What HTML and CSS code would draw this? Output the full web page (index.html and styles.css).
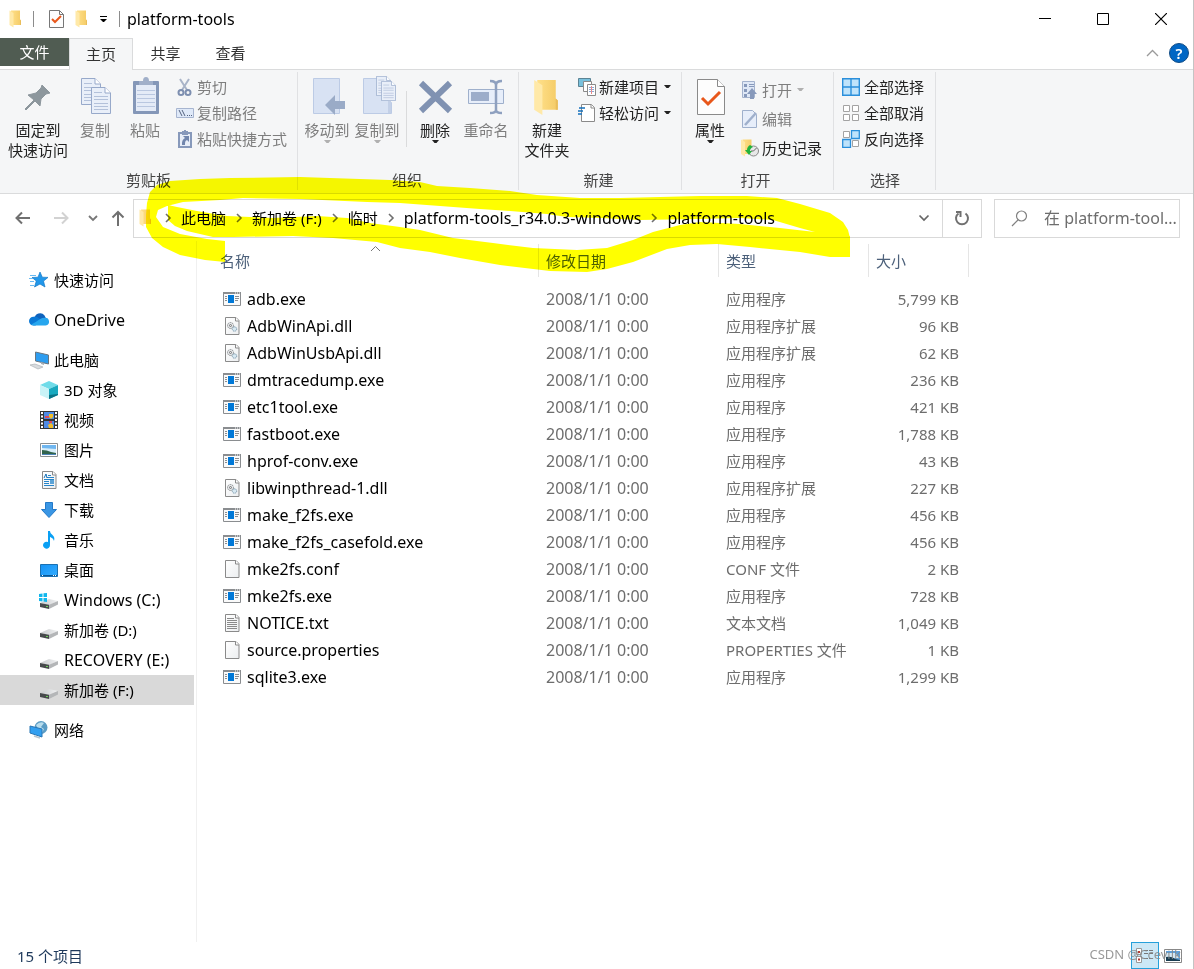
FILE: index.html
```html
<!DOCTYPE html>
<html lang="zh-CN">
<head>
<meta charset="utf-8">
<title>platform-tools</title>
<link rel="stylesheet" href="styles.css">
</head>
<body>
<svg class="defs" aria-hidden="true">
  <defs>
    <linearGradient id="gold" x1="0" x2="1"><stop offset="0" stop-color="#ffe08a"/><stop offset="1" stop-color="#f4cb66"/></linearGradient>
    <linearGradient id="paper" x1="0" y1="0" x2="1" y2="1"><stop offset="0" stop-color="#fff"/><stop offset="1" stop-color="#eceef0"/></linearGradient>
    <linearGradient id="drivetop" x1="0" x2="1"><stop offset="0" stop-color="#c9cbcd"/><stop offset="1" stop-color="#f0f1f2"/></linearGradient>
    <linearGradient id="screen" x1="0" x2="1" y2="1"><stop offset="0" stop-color="#1492f5"/><stop offset="1" stop-color="#35adff"/></linearGradient>
  </defs>
  <symbol id="folder" viewBox="0 0 24 36"><path fill="url(#gold)" d="M3 1h18v18l2 2v9H3z"/><path fill="#ffe9a8" d="M0 1l8 5v29l-8-5z"/><path fill="#e9bd5b" d="M21 19l2 2v9h-2z"/></symbol>
  <symbol id="exe" viewBox="0 0 18 18"><path fill="#fafafa" stroke="#8a8d90" d="M.5 2.500h17v13H.5z"/><path stroke="#8a8d90" stroke-width="2" d="M0 3h18"/><path stroke="#fff" d="M12 3h1m1 0h1m1 0h1"/><path fill="#0078d7" d="M5 5h6v8H5z"/><path stroke="#8a8d90" d="M2 6.500h2M2 8.500h2M2 10.500h2m8-4h4m-4 2h4m-4 2h3"/></symbol>
  <symbol id="page" viewBox="0 0 18 18"><path fill="url(#paper)" stroke="#8a8a8a" d="M2.500.5h10.500l3 3v14H2.500z"/><path fill="#fff" stroke="#8a8a8a" d="M12.500.5v3.500h3.500"/></symbol>
  <symbol id="dll" viewBox="0 0 18 18"><use href="#page"/><circle cx="7.500" cy="8.500" r="3" fill="#e6e8ea" stroke="#85898c" stroke-dasharray="1.500 .7"/><circle cx="7.500" cy="8.500" r="1" fill="none" stroke="#777"/><circle cx="11.500" cy="12" r="2.200" fill="#d7e8f2" stroke="#7895a8" stroke-dasharray="1.200 .6"/></symbol>
  <symbol id="txt" viewBox="0 0 18 18"><use href="#page"/><path stroke="#8a8a8a" d="M4 4.500h7M4 6.500h10M4 8.500h10M4 10.500h10M4 12.500h10M4 14.500h10"/></symbol>
  <symbol id="drive" viewBox="0 0 18 18"><path fill="url(#drivetop)" d="M0 12l9-4 9 2-9 4z"/><path fill="#474a4c" d="M0 12l9 1.800V18L0 16z"/><path fill="#b4b6b8" d="M9 13.800L18 10v3.500L9 18z"/><path stroke="#6bce58" d="M6 15.500h2"/></symbol>
  <symbol id="chev" viewBox="0 0 8 10"><path fill="none" stroke="#6f6f6f" stroke-width="1.600" d="M2 1l4 4-4 4"/></symbol>
  <symbol id="down" viewBox="0 0 12 8"><path fill="none" stroke="#666" stroke-width="1.700" d="M1.500 1.500L6 6l4.500-4.500"/></symbol>
  <symbol id="tri" viewBox="0 0 7 4"><path fill="currentColor" d="M0 0h7L4.500 3h-2z"/></symbol>
  <symbol id="check" viewBox="0 0 28 36"><path fill="#fdfdfd" stroke="#8a8a8a" d="M.5.5h20l7 7v28H.5z"/><path fill="#fff" stroke="#8a8a8a" d="M20.500.5v7h7"/><path fill="none" stroke="#e8571b" stroke-width="3" d="M5 19l6 6L23 13"/></symbol>
  <symbol id="bluepage" viewBox="0 0 20 27"><path fill="#e9eff9" stroke="#97a9ca" d="M.5.5H14l5.500 5.500v20.500H.5z"/><path fill="#fff" stroke="#97a9ca" d="M14 .5V6h5.500"/><path stroke="#b3c1da" d="M3 5.500h8M3 9.500h14M3 12.500h14M3 16.500h14M3 19.500h14M3 22.500h14"/></symbol>
</svg>

<div class="window">
  <header class="titlebar">
    <svg class="mini"><use href="#folder"/></svg>
    <span class="bar first"></span>
    <button class="plain" aria-label="属性"><svg class="minicheck" viewBox="0 0 15 18"><path fill="#fdfdfd" stroke="#777" d="M.5.5h10l4 4v13H.5z"/><path fill="none" stroke="#777" d="M10.500.5v4h4"/><path fill="none" stroke="#e8571b" stroke-width="2" d="M3 9l3 3 6-6"/></svg></button>
    <button class="plain" aria-label="新建文件夹"><svg class="mini"><use href="#folder"/></svg></button>
    <button class="plain quick" aria-label="自定义"><svg width="7" height="7" viewBox="0 0 7 7"><path stroke="#000" d="M0 .5h7"/><path d="M0 3h7L4 6H3z"/></svg></button>
    <span class="bar"></span>
    <h1 class="title">platform-tools</h1>
    <div class="caption">
      <button class="plain" aria-label="最小化"><svg width="12" height="12"><path stroke="#000" d="M0 5.500h12"/></svg></button>
      <button class="plain" aria-label="最大化"><svg width="12" height="12"><path fill="none" stroke="#000" d="M.5.5h11v11H.5z"/></svg></button>
      <button class="plain" aria-label="关闭"><svg width="12" height="12"><path stroke="#000" stroke-width="1.200" d="M0 0l12 12M12 0L0 12"/></svg></button>
    </div>
  </header>

  <nav class="tabs">
    <button class="tab file">文件</button>
    <button class="tab active">主页</button>
    <button class="tab">共享</button>
    <button class="tab">查看</button>
    <div class="tabtools">
      <button class="plain" aria-label="折叠功能区"><svg width="13" height="8"><path fill="none" stroke="#9a9a9a" stroke-width="1.300" d="M1 7l5.500-5.500L12 7"/></svg></button>
      <button class="help" aria-label="帮助">?</button>
    </div>
  </nav>

  <section class="ribbon">
    <div class="group clip">
      <div class="tools">
        <button class="big wide">
          <svg class="art" viewBox="0 0 36 40"><path fill="#8d979d" d="M22 8l8 8-4 1-5 5-1 7-5-5-9 9-1-1 9-9-6-5 8-2 5-5z" stroke="#8d979d" stroke-linejoin="round"/></svg>
          <span>固定到<br>快速访问</span></button>
        <button class="big off">
          <svg class="art" viewBox="0 0 36 40"><use href="#bluepage" x="4" y="1" width="20" height="27"/><use href="#bluepage" x="14" y="10" width="20" height="27"/></svg>
          <span>复制</span></button>
        <button class="big off">
          <svg class="art" viewBox="0 0 36 40"><rect x="6" y="4" width="26" height="33" rx="1" fill="#8497b8"/><path fill="#e4ebf7" d="M9 8h20v26H9z"/><path stroke="#b9c7e0" d="M10 13.500h18m-18 4h18m-18 4h18m-18 4h18m-18 4h18"/><path fill="#a0afc9" d="M12 4h4a3 4 0 0 1 6 0h4v4H12z"/></svg>
          <span>粘贴</span></button>
        <div class="stack off">
          <button class="small"><svg class="ico" viewBox="0 0 18 18"><path stroke="#a9b4c8" stroke-width="2" d="M4 1l7 11M13 1L6 12"/><circle cx="5" cy="14.500" r="2.500" fill="none" stroke="#7d8fb0" stroke-width="2"/><circle cx="12" cy="14.500" r="2.500" fill="none" stroke="#7d8fb0" stroke-width="2"/></svg>剪切</button>
          <button class="small"><svg class="ico" viewBox="0 0 18 18"><path fill="#dfe9f8" stroke="#a7b5d0" d="M.5 4.500h17v9H.5z"/><path stroke="#53627f" d="M3 6l3 6M6 6l3 6m2-.5h1m1 0h1m1 0h1"/></svg>复制路径</button>
          <button class="small"><svg class="ico" viewBox="0 0 18 18"><path fill="#e8eef8" stroke="#8799bb" stroke-width="2" d="M3 3h12v14H3z"/><path fill="#8799bb" d="M8 0h2v1h2v4H6V1h2z"/><path fill="#7186ad" d="M7 6h6v6l-2-2c-2 1-2 2-2 5H6c0-3 0-5 3-7z"/></svg>粘贴快捷方式</button>
        </div>
      </div>
      <h2>剪贴板</h2>
    </div>

    <div class="group org">
      <div class="tools">
        <button class="big off">
          <svg class="art" viewBox="0 0 36 40"><path fill="#d8e2f3" stroke="#bccbe5" d="M4.500 1.500h26v35h-26z"/><path fill="#9aabc7" d="M16 28l10-10v6h10v8H26v6z"/></svg>
          <span>移动到</span><svg class="tri"><use href="#tri"/></svg></button>
        <button class="big off">
          <svg class="art" viewBox="0 0 36 40"><path fill="#d8e2f3" stroke="#bccbe5" d="M4.500 1.500h24v22l4 2v11h-28z"/><path fill="#c3d0e7" d="M29 24h3v12h-3z"/><use href="#bluepage" x="17" y="-1" width="15" height="20"/><use href="#bluepage" x="22" y="4" width="15" height="20"/></svg>
          <span>复制到</span><svg class="tri"><use href="#tri"/></svg></button>
        <span class="rule"></span>
        <button class="big">
          <svg class="art" viewBox="0 0 36 40"><path stroke="#8092b2" stroke-width="6" d="M4 6l29 28M33 6L4 34"/></svg>
          <span>删除</span><svg class="tri"><use href="#tri"/></svg></button>
        <button class="big off">
          <svg class="art" viewBox="0 0 36 40"><path fill="#e7eefa" stroke="#9fb0cc" d="M.5 12.500h35v14H.5z"/><path fill="#9dadca" d="M3 15h18v9H3z"/><path fill="none" stroke="#8ea0bf" stroke-width="2.500" d="M22 4q6 0 6 4v25q0 3-6 3M34 4q-6 0-6 4m0 25q0 3 6 3"/></svg>
          <span>重命名</span></button>
      </div>
      <h2>组织</h2>
    </div>

    <div class="group new">
      <div class="tools">
        <button class="big">
          <svg class="art" viewBox="0 0 36 40"><use href="#folder" x="5" y="2" width="25" height="37"/></svg>
          <span>新建<br>文件夹</span></button>
        <div class="stack">
          <button class="small"><svg class="ico" viewBox="0 0 18 18"><path fill="#78c0dc" stroke="#5b8394" d="M.5.5h12v8H.5z"/><path fill="#fff" stroke="#8a8a8a" d="M5.500 3.500h8v10h-8z"/><path fill="#fff" stroke="#8a8a8a" d="M9.500 6.500h8v11h-8z"/><path stroke="#8ba9d8" d="M11 9.500h5m-5 2h5m-5 2h5"/><path stroke="#e98989" d="M13.500 8v8"/></svg>新建项目<svg class="tri"><use href="#tri"/></svg></button>
          <button class="small"><svg class="ico" viewBox="0 0 18 18"><path fill="#fff" stroke="#8a8a8a" d="M3.500 .5h10l3 3v14h-13z"/><path fill="#fff" stroke="#8a8a8a" d="M13 .5v3.500h3.500"/><path stroke="#1671bd" stroke-width="1.500" d="M1 4h6M0 7h5M0 10h4"/></svg>轻松访问<svg class="tri"><use href="#tri"/></svg></button>
        </div>
      </div>
      <h2>新建</h2>
    </div>

    <div class="group open">
      <div class="tools">
        <button class="big">
          <svg class="art" viewBox="0 0 36 40"><use href="#check" x="5" y="2" width="28" height="36"/></svg>
          <span>属性</span><svg class="tri"><use href="#tri"/></svg></button>
        <div class="stack loose">
          <button class="small off"><svg class="ico" viewBox="0 0 18 18"><path fill="#dfe8f6" stroke="#a3b2cd" d="M1.500.5h12v16h-12z"/><path fill="#8799bb" d="M3 3h3v3H3zm0 5h3v3H3zm0 5h3v3H3zM11 7l5 6h-3v5H9v-5H6z"/><path stroke="#8799bb" d="M8 3.500h5m-5 2h5"/></svg>打开<svg class="tri"><use href="#tri"/></svg></button>
          <button class="small off"><svg class="ico" viewBox="0 0 18 18"><path fill="#e7eefa" stroke="#9fb0cc" d="M1.500.5h10l4 4v13h-14z"/><path stroke="#9fb0cc" stroke-width="2.500" d="M4 15L15 3"/></svg>编辑</button>
          <button class="small"><svg class="ico" viewBox="0 0 18 18"><use href="#folder" x="0" y="0" width="12" height="18"/><circle cx="12.500" cy="12" r="5" fill="#e8e8e8" stroke="#888"/><path fill="none" stroke="#666" d="M12.500 12l3-3m-3 3H10"/><path fill="#22b33c" d="M9 6c-2 1-3 3-3 5H4l4 5 3-4H9c0-2 1-3 3-4z"/></svg>历史记录</button>
        </div>
      </div>
      <h2>打开</h2>
    </div>

    <div class="group pick">
      <div class="tools">
        <div class="stack">
          <button class="small"><svg class="ico" viewBox="0 0 18 18"><path fill="#bfe3fb" stroke="#2b8fdb" stroke-width="1.400" d="M.7.7h16.600v16.600H.7zM9 1v16M1 9h16"/></svg>全部选择</button>
          <button class="small"><svg class="ico" viewBox="0 0 18 18"><path fill="#fff" stroke="#a3a3a3" d="M1.500 1.500h6v6h-6zm9 0h6v6h-6zm-9 9h6v6h-6zm9 0h6v6h-6z"/></svg>全部取消</button>
          <button class="small"><svg class="ico" viewBox="0 0 18 18"><path fill="#fff" stroke="#a3a3a3" d="M1.500 1.500h6v6h-6zm9 9h6v6h-6z"/><path fill="#bfe3fb" stroke="#2b8fdb" stroke-width="1.300" d="M9.500.7h7.800v7.800H9.500zM.7 9.500h7.800v7.800H.7z"/></svg>反向选择</button>
        </div>
      </div>
      <h2>选择</h2>
    </div>
  </section>

  <div class="navbar">
    <div class="arrows">
      <button class="plain" aria-label="后退"><svg width="16" height="14"><path fill="none" stroke="#707070" stroke-width="2" d="M15 7H2m5-5.500L1.500 7 7 12.500"/></svg></button>
      <button class="plain" aria-label="前进"><svg width="16" height="14"><path fill="none" stroke="#d2d2d2" stroke-width="2" d="M1 7h13M9 1.500L14.500 7 9 12.500"/></svg></button>
      <button class="plain slim" aria-label="最近位置"><svg width="10" height="7"><path fill="none" stroke="#777" stroke-width="1.800" d="M1 1l4 4 4-4"/></svg></button>
      <button class="plain slim" aria-label="向上"><svg width="14" height="17"><path fill="none" stroke="#707070" stroke-width="2" d="M7 16V2M1.500 7.500L7 2l5.500 5.500"/></svg></button>
    </div>
    <div class="address">
      <svg class="mini"><use href="#folder"/></svg>
      <div class="crumbs">
        <svg class="chev"><use href="#chev"/></svg><a href="#pc">此电脑</a>
        <svg class="chev"><use href="#chev"/></svg><a href="#f">新加卷 (F:)</a>
        <svg class="chev"><use href="#chev"/></svg><a href="#tmp">临时</a>
        <svg class="chev"><use href="#chev"/></svg><a class="latin" href="#win">platform-tools_r34.0.3-windows</a>
        <svg class="chev"><use href="#chev"/></svg><a class="latin" href="#tools">platform-tools</a>
      </div>
      <button class="plain history" aria-label="以前的位置"><svg width="12" height="8"><use href="#down"/></svg></button>
      <button class="plain refresh" aria-label="刷新"><svg width="16" height="17"><path fill="none" stroke="#707070" stroke-width="2" d="M11.500 3.500a6 6 0 1 1-7 0"/><path fill="none" stroke="#707070" stroke-width="2" d="M2 2h4.500v5"/></svg></button>
    </div>
    <label class="search">
      <svg width="17" height="17"><circle cx="10.500" cy="6" r="5" fill="none" stroke="#808080" stroke-width="1.200"/><path stroke="#808080" stroke-width="1.200" d="M7 10l-6 6"/></svg>
      <input class="latin" type="text" aria-label="搜索" placeholder="在 platform-tool...">
    </label>
  </div>

  <main class="body">
    <aside class="side">
      <ul>
        <li><a href="#q"><svg viewBox="0 0 20 18"><path fill="#2197ea" stroke="#1477c5" stroke-width=".7" d="M11 1l2.300 5.200 5.700.2-4.500 3.700L16 16l-5-3-5.500 3 1.800-6L3 6.500l6-.3z"/><path stroke="#68baf2" d="M1 4.500h6M0 7.500h4m-3 3h4m-4 4h4"/></svg>快速访问</a></li>
        <li class="gap"><a class="latin" href="#o"><svg viewBox="0 2 18 16"><path fill="#0f63bd" d="M5 9a5 5 0 0 1 9-3l2 4-6 4z"/><path fill="#0b79d6" d="M4 15a4 4 0 0 1 0-8q3-1 6 2l-4 6z"/><path fill="#27a6ee" d="M2 14q4-2 8-5 2-1 4-1a3.500 3.500 0 0 1 1 7H4z"/></svg>OneDrive</a></li>
        <li class="gap"><a href="#pc"><svg viewBox="0 0 20 18"><path fill="#2d9df0" stroke="#687681" d="M6.500 1l13 3v9l-13-3z"/><path fill="#a4adb5" d="M12 11l3 1v2l-3-1z"/><path fill="#d8dbde" stroke="#adb3b8" stroke-width=".7" d="M1 14l5-1 8 3-5 2z"/></svg>此电脑</a></li>
        <li class="sub"><a href="#3d"><svg viewBox="0 0 18 18"><path fill="#70dce9" d="M9 0l9 4-9 4-9-4z"/><path fill="#c9f3f7" d="M0 4l9 4v10l-9-4z"/><path fill="#18a9bf" d="M18 4L9 8v10l9-4z"/><path fill="#0b7386" d="M9 14l9-1v1l-9 4z"/></svg>3D 对象</a></li>
        <li class="sub"><a href="#v"><svg viewBox="0 0 18 18"><path fill="#343434" d="M0 0h18v18H0z"/><path fill="#4e8ae5" d="M4 1h10v7H4zm0 9h10v7H4z"/><path fill="#f0bd2b" d="M9 3h4v3l-2 2-2-2zM8 14l3-2 2 2v3H9z"/><path fill="#e0485a" d="M5 5h4v2H5zm4 5h3v2H9z"/><path fill="none" stroke="#fff" stroke-width="2" stroke-dasharray="2 1.500" d="M2 1v17M16 1v17"/></svg>视频</a></li>
        <li class="sub"><a href="#p"><svg viewBox="0 0 18 18"><path fill="#fff" stroke="#8b8f92" d="M.5 2.500h17v13H.5z"/><path fill="#6fb6f0" d="M2 4h14v10H2z"/><path fill="#d7edf9" d="M2 7l14 1v4H2z"/><path fill="#32644d" d="M2 9q5 0 9 2l5 1v1H2z"/><path fill="#4d83b8" d="M2 13h14v1H2z"/></svg>图片</a></li>
        <li class="sub"><a href="#d"><svg viewBox="0 0 18 18"><use href="#page"/><path stroke="#2684c9" d="M8 4.500h3m-4 2h7m-10 2h10m-10 2h5m-5 2h5m-5 2h10"/><path fill="none" stroke="#1570b8" d="M4 7l2-4 1 4"/><path fill="#5ca3d6" d="M10 9h4v4h-4z"/></svg>文档</a></li>
        <li class="sub"><a href="#x"><svg viewBox="0 0 18 18"><path fill="#3a96e4" stroke="#2379c8" d="M5.500 1.500h7v7h4L9 16.500 1.500 8.500h4z"/></svg>下载</a></li>
        <li class="sub"><a href="#m"><svg viewBox="0 0 18 18"><path fill="#0aa0f4" d="M8 0h2c0 4 6 4 4 10-1-3-2-3-4-4v8a3.500 3.500 0 1 1-2-3z"/></svg>音乐</a></li>
        <li class="sub"><a href="#t"><svg viewBox="0 0 18 18"><path fill="url(#screen)" stroke="#1b71b2" d="M.5 3.500h17v12H.5z"/><path stroke="#0a5796" d="M1 14.500h16"/><path stroke="#fff" d="M2 14.500h1m10 0h1m1 0h1"/></svg>桌面</a></li>
        <li class="sub"><a class="latin" href="#c"><svg viewBox="0 0 18 18"><use href="#drive"/><path fill="#11b7ed" d="M-1 3l3.500-.5V6H-1zm4.500-.7L7 2v4H3.500zM-1 7h3.500v3.500L-1 10zm4.500 0H7v4l-3.500-.5z"/></svg>Windows (C:)</a></li>
        <li class="sub"><a href="#dd"><svg viewBox="0 0 18 18"><use href="#drive"/></svg>新加卷 (D:)</a></li>
        <li class="sub"><a class="latin" href="#e"><svg viewBox="0 0 18 18"><use href="#drive"/></svg>RECOVERY (E:)</a></li>
        <li class="sub selected"><a href="#f"><svg viewBox="0 0 18 18"><use href="#drive"/></svg>新加卷 (F:)</a></li>
        <li class="gap"><a href="#n"><svg viewBox="0 0 20 18"><circle cx="12" cy="6.500" r="6.500" fill="#5b9cc4"/><path fill="#b8dcec" d="M7 4q4-4 8-2l-3 4 3 2-2 4-4-4z"/><path fill="#329ff0" stroke="#2876b5" d="M1 5l12 3v8L1 12z"/><path stroke="#b9c5ce" stroke-width="1.500" d="M5 15l6 2"/></svg>网络</a></li>
      </ul>
    </aside>
    <section class="files">
      <table>
        <colgroup><col class="c-name"><col class="c-date"><col class="c-type"><col class="c-size"></colgroup>
        <thead><tr><th class="sorted">名称<svg class="sort" width="11" height="7"><path fill="none" stroke="#777" d="M1 6l4.500-4.500L10 6"/></svg></th><th>修改日期</th><th>类型</th><th>大小</th></tr></thead>
        <tbody>
          <tr><td><svg><use href="#exe"/></svg>adb.exe</td><td>2008/1/1 0:00</td><td>应用程序</td><td>5,799 KB</td></tr>
          <tr><td><svg><use href="#dll"/></svg>AdbWinApi.dll</td><td>2008/1/1 0:00</td><td>应用程序扩展</td><td>96 KB</td></tr>
          <tr><td><svg><use href="#dll"/></svg>AdbWinUsbApi.dll</td><td>2008/1/1 0:00</td><td>应用程序扩展</td><td>62 KB</td></tr>
          <tr><td><svg><use href="#exe"/></svg>dmtracedump.exe</td><td>2008/1/1 0:00</td><td>应用程序</td><td>236 KB</td></tr>
          <tr><td><svg><use href="#exe"/></svg>etc1tool.exe</td><td>2008/1/1 0:00</td><td>应用程序</td><td>421 KB</td></tr>
          <tr><td><svg><use href="#exe"/></svg>fastboot.exe</td><td>2008/1/1 0:00</td><td>应用程序</td><td>1,788 KB</td></tr>
          <tr><td><svg><use href="#exe"/></svg>hprof-conv.exe</td><td>2008/1/1 0:00</td><td>应用程序</td><td>43 KB</td></tr>
          <tr><td><svg><use href="#dll"/></svg>libwinpthread-1.dll</td><td>2008/1/1 0:00</td><td>应用程序扩展</td><td>227 KB</td></tr>
          <tr><td><svg><use href="#exe"/></svg>make_f2fs.exe</td><td>2008/1/1 0:00</td><td>应用程序</td><td>456 KB</td></tr>
          <tr><td><svg><use href="#exe"/></svg>make_f2fs_casefold.exe</td><td>2008/1/1 0:00</td><td>应用程序</td><td>456 KB</td></tr>
          <tr><td><svg><use href="#page"/></svg>mke2fs.conf</td><td>2008/1/1 0:00</td><td>CONF 文件</td><td>2 KB</td></tr>
          <tr><td><svg><use href="#exe"/></svg>mke2fs.exe</td><td>2008/1/1 0:00</td><td>应用程序</td><td>728 KB</td></tr>
          <tr><td><svg><use href="#txt"/></svg>NOTICE.txt</td><td>2008/1/1 0:00</td><td>文本文档</td><td>1,049 KB</td></tr>
          <tr><td><svg><use href="#page"/></svg>source.properties</td><td>2008/1/1 0:00</td><td>PROPERTIES 文件</td><td>1 KB</td></tr>
          <tr><td><svg><use href="#exe"/></svg>sqlite3.exe</td><td>2008/1/1 0:00</td><td>应用程序</td><td>1,299 KB</td></tr>
        </tbody>
      </table>
    </section>
  </main>

  <footer class="status">
    <span>15 个项目</span>
    <div class="views">
      <button class="view on" aria-label="详细信息"><svg width="18" height="16"><path fill="#fff" stroke="#999" d="M.5.5h5v6h-5zm0 8h5v6h-5z"/><path stroke="#b5392f" stroke-width="2" d="M2 11.500h2M2 4h2"/><path stroke="#777" d="M8 2.500h4m1 0h4m-9 3h4m1 0h4m-9 5h4m1 0h4"/></svg></button>
      <button class="view" aria-label="大图标"><svg width="18" height="14"><path fill="#fff" stroke="#888" d="M.5.5h17v13H.5z"/><path fill="#5ea1dc" d="M2 2h14v10H2z"/><path fill="#d4e8f4" d="M2 4h9l5 5H2z"/><path fill="#193d51" d="M2 8q6-1 9 2l5 1v1H2z"/></svg></button>
    </div>
    <span class="watermark">CSDN @Ccevilk</span>
  </footer>
  <svg class="marker" viewBox="0 0 1194 100" aria-hidden="true"><g transform="translate(0 -175)"><path d="M225 262L205 260 180 255 163 247 152 238 146 227 146 215 147 203 150 192 157 185 170 181 200 179 230 178 300 177 330 178 390 180 420 182 437 186 470 188 510 191 537 195 580 198 620 198 660 197 700 196 747 196 777 198 800 204 830 213 843 222 848 230 850 238 850 257 830 245 815 232 800 228 773 220 740 218 700 219 640 220 600 218 567 217 547 214 510 211 480 209 440 206 400 203 367 202 300 199 243 198 220 200 183 202 167 206 158 210 156 217 163 227 180 234 207 239 225 241zM168 205L177 207 197 211 227 216 273 218 317 216 347 218 370 223 400 227 420 230 453 238 493 243 533 248 577 250 607 248 633 240 653 232 680 225 700 222 740 224 780 228 815 232 850 236 850 257 830 257 800 252 750 247 717 244 690 245 667 249 633 262 607 269 587 272 550 271 500 265 460 258 430 252 400 248 377 242 333 238 293 236 233 237 213 237 187 231 175 226 168 220z"/></g></svg>
</div>
</body>
</html>
```
FILE: styles.css
```css
* { box-sizing: border-box; }
body {
  margin: 0;
  background: #fff;
  color: #000;
  font: 15px/20px "Noto Sans", "Noto Sans CJK SC", sans-serif;
}
button { font: inherit; color: inherit; border: 0; background: none; padding: 0; }
a { color: inherit; text-decoration: none; }
h1, h2, ul { margin: 0; padding: 0; font-weight: 400; }
ul { list-style: none; }
svg { flex: none; }
.defs { position: absolute; width: 0; height: 0; }
.latin { font-size: 16px; }

.window {
  position: relative;
  display: flex;
  flex-direction: column;
  min-height: 100vh;
  overflow: hidden;
  border-right: 1px solid #c4c4c4;
}

.plain { display: flex; align-items: center; justify-content: center; }

.titlebar { display: flex; align-items: center; height: 38px; padding-left: 9px; gap: 11px; }
.mini { width: 13px; height: 18px; }
.minicheck { width: 15px; height: 18px; }
.bar { width: 1px; height: 16px; background: #8c8c8c; }
.bar.first { margin-right: 4px; }
.titlebar .quick { width: 7px; margin: 0 1px; }
.title { font-size: 16px; line-height: 20px; margin-left: -4px; }
.caption { display: flex; margin-left: auto; padding-right: 3px; }
.caption .plain { width: 58px; height: 38px; }

.tabs { display: flex; height: 32px; border-bottom: 1px solid #dadbdc; }
.tab { width: 65px; height: 32px; padding-bottom: 2px; color: #333; }
.tab.file { width: 69px; height: 28px; padding: 0; background: #505c52; color: #fff; }
.tab.active { width: 64px; background: #f5f6f7; border: 1px solid #dadbdc; border-bottom: 0; }
.tabtools { display: flex; align-items: center; gap: 10px; margin-left: auto; padding: 0 4px 2px 0; }
.help { width: 20px; height: 20px; border-radius: 50%; background: #0066c4; border: 1px solid #124d86; color: #fff; font-weight: 600; line-height: 18px; }

.ribbon { display: flex; height: 124px; padding: 2px 0 3px; background: #f5f6f7; border-bottom: 1px solid #dadbdc; color: #222; }
.group { display: flex; flex-direction: column; border-right: 1px solid #e0e1e3; padding-right: 10px; }
.group h2 { margin-top: auto; font-size: 15px; line-height: 20px; text-align: center; color: #444; padding-left: 4px; }
.group.clip h2, .group.pick h2 { padding-left: 10px; }
.group.org h2 { padding-left: 0; }
.tools { display: flex; align-items: flex-start; padding-top: 2px; }
.big { display: flex; flex-direction: column; align-items: center; width: 50px; padding-top: 3px; white-space: nowrap; }
.big.wide { width: 64px; margin-left: 6px; }
.big .art { width: 36px; height: 40px; margin-bottom: 3px; }
.art { overflow: visible; }
.off { color: #7e7e7e; }
.tri { width: 7px; height: 4px; }
.off .tri { color: #b0b0b0; }
.stack { display: flex; flex-direction: column; padding: 0 0 0 6px; }
.small { display: flex; align-items: center; gap: 3px; height: 26px; white-space: nowrap; }
.small .tri { margin-left: 2px; }
.ico { width: 18px; height: 18px; overflow: visible; }
.group .loose { padding-top: 1px; }
.loose .small { height: 29px; }
.group.org { padding: 0 6px 0 4px; }
.rule { width: 1px; height: 56px; margin: 17px 3px 0 4px; background: #dadbdc; }
.org .big:last-child { width: 52px; }
.new { padding-left: 3px; }
.open { padding-left: 3px; padding-right: 11px; }
.pick { padding-left: 2px; padding-right: 11px; }
.pick .small { gap: 4px; }

.navbar { display: flex; align-items: center; height: 47px; padding: 1px 13px 0 0; }
.arrows { display: flex; width: 133px; padding-left: 4px; }
.arrows .plain { width: 38px; height: 38px; }
.arrows .slim { width: 25px; }
.address { display: flex; align-items: center; flex: 1; height: 39px; border: 1px solid #d9d9d9; padding-left: 5px; }
.crumbs { display: flex; align-items: center; flex: 1; gap: 9px; padding-left: 12px; white-space: nowrap; }
.chev { width: 8px; height: 10px; }
.history { width: 36px; height: 37px; }
.refresh { width: 39px; height: 37px; border-left: 1px solid #d9d9d9; }
.search { display: flex; align-items: center; width: 186px; height: 39px; margin-left: 12px; border: 1px solid #d9d9d9; padding-left: 16px; gap: 16px; }
.search input { flex: 1; min-width: 0; border: 0; outline: 0; padding: 0; background: none; font-family: inherit; color: #6d6d6d; }
.search input::placeholder { color: #6d6d6d; }

.body { display: flex; flex: 1; }
.side { width: 197px; padding: 24px 2px 0 0; border-right: 1px solid #f0f0f0; }
.side a { display: flex; align-items: center; height: 30px; padding-left: 29px; gap: 5px; }
.side svg { width: 20px; height: 18px; overflow: visible; }
.side .sub a { padding-left: 40px; gap: 6px; }
.side .sub svg { width: 18px; }
.gap { margin-top: 10px; }
.selected { background: #d9d9d9; }

.files { flex: 1; padding-top: 3px; }
table { border-collapse: separate; border-spacing: 0; table-layout: fixed; width: 772px; }
.c-date { width: 180px; }
.c-type { width: 150px; }
.c-size { width: 100px; }
th { position: relative; height: 33px; padding: 0 7px; border-right: 1px solid #e5e5e5; text-align: left; font-weight: 400; color: #4c607a; }
th:first-child { padding-left: 23px; }
.sort { position: absolute; top: 1px; left: 173px; }
tbody::before { content: ""; display: block; height: 8px; }
td { height: 27px; padding: 0 7px; white-space: nowrap; color: #6d6d6d; }
td:first-child { padding-left: 26px; color: #000; font-size: 16px; }
td:nth-child(2) { font-size: 16px; }
td:last-child { text-align: right; padding-right: 10px; }
td svg { width: 18px; height: 18px; margin-right: 6px; vertical-align: -3px; }

.status { position: relative; display: flex; align-items: center; justify-content: space-between; height: 27px; padding: 0 6px 0 17px; color: #1e395b; }
.views { display: flex; }
.view { display: flex; align-items: center; justify-content: center; width: 28px; height: 27px; }
.view.on { background: #cce8f6; border: 1px solid #26a0da; }
.watermark { position: absolute; right: 12px; top: 2px; font-size: 13px; color: #888; opacity: .85; }

.marker { position: absolute; left: 0; top: 175px; width: 1194px; height: 100px; fill: #ff0; mix-blend-mode: multiply; pointer-events: none; }
```
